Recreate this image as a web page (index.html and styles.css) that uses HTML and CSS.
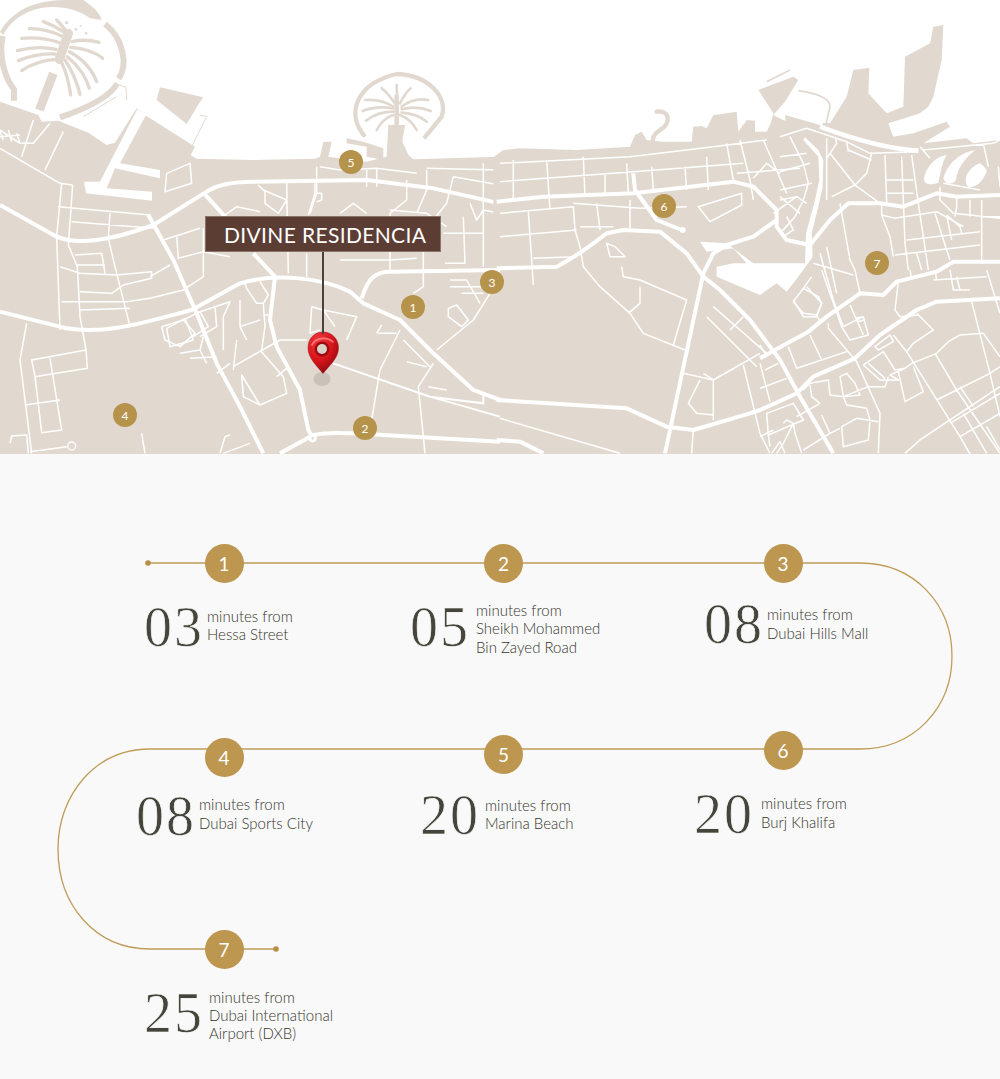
FILE: index.html
```html
<!DOCTYPE html>
<html lang="en">
<head>
<meta charset="utf-8">
<title>Divine Residencia location</title>
<link rel="stylesheet" href="styles.css">
</head>
<body>
<section class="map">
<svg class="map-art" viewBox="0 0 1000 454" aria-hidden="true">
  <defs>
    <radialGradient id="pinfill" cx="35%" cy="22%" r="85%">
      <stop offset="0" stop-color="#ee3a3c"/><stop offset=".55" stop-color="#d8141b"/><stop offset="1" stop-color="#7e0a0e"/>
    </radialGradient>
  </defs>
  <rect class="land" x="0" y="180" width="1000" height="274"/>
  <g transform="scale(.33333)">
    <path class="land" d="M0,305 L115,345 L125,365 L175,362 L265,398 L320,435 L345,428 L410,325 L435,345 L585,440 L572,465 L590,476 L760,480 L945,476 L960,470 L970,425 L995,425 L985,470 L1040,478 L1100,485 L1160,470 L1165,375 L1215,375 L1205,420 L1225,465 L1240,478 L1500,470 L1500,700 L0,700 Z"/>
    <path class="land" d="M480,262 L610,292 L596,312 L560,372 L470,300 Z"/>
    <path class="hair" d="M600,345 L620,350 L575,440 M358,255 L378,262 L380,300 M250,350 L350,290"/>
    <path class="land" d="M0,95 C40,30 100,3 190,0 L250,0 C280,20 300,40 305,60 L270,55 C230,25 170,15 120,25 C70,35 30,65 10,105 Z"/>
    <g class="ring">
      <path d="M8,108 C-5,170 15,235 42,268 L42,302"/>
      <path d="M315,72 C370,115 385,195 356,236"/>
      <path d="M352,250 C330,290 260,325 180,352"/>
      <path class="ring-thin" d="M1095,410 C1035,340 1070,250 1190,222 C1285,225 1345,290 1325,350 L1272,415"/>
    </g>
    <g class="fronds">
      <path d="M170,178 C130,180 90,195 65,212"/>
      <path d="M165,162 C130,160 85,168 55,182"/>
      <path d="M168,148 C130,140 90,142 52,152"/>
      <path d="M178,128 C140,115 100,112 65,115"/>
      <path d="M185,108 C160,95 120,85 88,86"/>
      <path d="M192,96 C175,85 150,72 130,65"/>
      <path d="M198,92 C190,82 180,70 170,60"/>
      <path d="M216,125 C245,118 270,120 297,127"/>
      <path d="M212,142 C250,145 285,155 308,175"/>
      <path d="M208,155 C245,175 275,205 290,245"/>
      <path d="M202,170 C232,195 258,230 268,265"/>
      <path d="M195,180 C215,210 232,250 240,283"/>
      <path d="M186,190 C200,220 208,255 212,285"/>
      <path class="crown" d="M178,178 L205,100"/>
      <path class="trunk" d="M118,330 L160,220"/>
    </g>
    <g class="fronds-dots"><circle cx="200" cy="68" r="5"/><circle cx="228" cy="88" r="4"/><circle cx="242" cy="78" r="3"/><circle cx="258" cy="100" r="4"/></g>
    <g class="fronds-small">
      <path d="M1180,320 C1150,300 1120,298 1095,300"/>
      <path d="M1180,325 C1150,320 1115,322 1088,333"/>
      <path d="M1180,335 C1150,335 1120,345 1098,362"/>
      <path d="M1180,345 C1160,350 1140,370 1130,390"/>
      <path d="M1185,310 C1170,290 1160,275 1145,265"/>
      <path d="M1192,305 L1190,255"/>
      <path d="M1200,310 C1210,290 1220,275 1232,265"/>
      <path d="M1205,320 C1230,300 1260,295 1285,300"/>
      <path d="M1205,328 C1235,320 1265,322 1292,333"/>
      <path d="M1205,338 C1235,340 1260,348 1280,365"/>
      <path d="M1200,345 C1225,355 1240,370 1250,390"/>
      <path class="trunk-small" d="M1190,290 L1190,380"/>
    </g>
    <path class="land" d="M1040,415 L1090,425 L1150,445 L1150,480 L1100,470 L1100,440 L1040,430 Z M1165,375 L1215,375 L1200,465 L1170,465 Z"/>
    <path class="water" d="M412,328 L300,545 L252,545 L258,580 L456,602 L456,575 L320,565 L345,505 L480,535 L480,510 L360,490 L438,345 Z"/>
    <g class="road-minor">
      <path d="M185,550 L170,710 L180,990 M218,555 L205,735 L232,800 L240,950 L258,1050 L262,1105 L105,1130 L95,1080 L258,1050 M180,550 L218,555 M175,620 L450,645 M215,665 L460,685 M330,635 L325,715 L345,800 L390,980 M225,765 L305,760 L315,820 M232,795 L315,795 M180,800 L240,820 L350,825 L455,815 L455,835 L370,855 L335,880 L240,875 M185,905 L380,905 L450,895 M240,930 L390,925"/>
      <path d="M500,520 L495,575 L575,550 L570,490 Z M80,970 L60,1080 L95,1360 M150,1075 L185,1290 L125,1298 L105,1130 M75,1215 L180,1200 M30,1330 L35,1308 L80,1305 L85,1360 M90,1355 L200,1340 M425,1300 L435,1360 M0,390 L60,430 L100,430 L150,370 M190,395 L135,510 M100,360 L65,470 M0,445 L180,550 M0,395 L10,420 M25,390 L35,425 M50,400 L60,430 M0,410 L60,405"/>
      <path d="M500,985 L555,955 L580,1020 L510,1040 Z M540,1060 L600,1050 L620,1090 M570,1075 L650,1070 M700,1100 L840,1020 L920,1020 M780,1050 L850,1130 L860,1180 L780,1215 L730,1190 L725,1125 L780,1215 M860,1105 L830,1130 M690,1090 L650,1120 M710,1020 L700,1110 M600,1050 L610,1010"/>
      <path d="M950,500 L950,580 L930,640 M1020,640 L1060,610 L1100,640 M1100,510 L1100,560 M1130,505 L1130,560 M1220,540 L1220,600 L1170,640 L1170,815 M1280,510 L1280,570 L1250,640 M1360,530 L1340,610 L1300,660 L1270,720 L1270,860 L1240,880 M1450,490 L1450,800 M1390,650 L1395,790 L1335,790 M1410,610 L1430,660 L1450,630 M1170,630 L1280,640 L1340,680 M1330,700 L1450,700 M1250,775 L1170,780 L1020,780 M960,500 L1020,510 L1130,505 L1250,520 M1280,505 L1500,510 M1360,530 L1500,555 M1450,630 L1500,640"/>
      <path d="M1040,1020 L1070,950 L970,930 M1200,990 L1140,1110 L1115,1260 M1130,1000 L1145,975 M1300,1090 L1255,1160 L1275,1360 M1210,1020 L1290,1100 M1220,1085 L1280,1100 M1285,1160 L1340,1170 M1350,860 L1450,860 M1470,880 L1420,960 L1310,1050 M1345,925 L1370,915 L1405,960 L1385,980 L1345,950 Z M1350,840 L1400,840 L1440,910 M1385,880 L1450,880 M1135,1000 L1190,1000 M660,1360 L675,1310 L690,1305 M670,1360 L750,1330"/>
      <g transform="translate(450,510)">
        <path d="M325,45 L345,65 L345,100 L385,130 L410,90 L340,60 M410,40 L415,310 M495,40 L495,70 L475,135 M500,70 L515,70 L515,90 L500,95 M225,135 L260,110 L330,125 M470,250 L470,320 M0,320 L60,285 M40,210 L150,175 M80,195 L85,265 L160,245 L240,260 M160,175 L160,320 L100,360 L0,385 M285,340 L290,355 L320,400 L340,400 L355,375 L330,335 M150,425 L240,395 L220,440 L220,540 M150,425 L175,470 L130,500 M195,410 L200,470 L150,500 M270,390 L270,470 L290,510 M340,435 L360,435 M340,400 L345,470 L335,540 M270,470 L330,450 M35,470 L45,510 L90,530 L135,490 L100,450 L35,470 M485,410 L480,490 L510,480 M485,410 L520,420 L555,470 M100,450 L150,425"/>
      </g>
    </g>
    <g class="road-mid"><path d="M1000,1090 L1290,1190 L1450,1210 L1450,1180 M1290,1190 L1500,1250"/></g>
    <g class="road-major">
      <path d="M0,615 L170,710 C240,740 350,715 460,675 L620,575 C660,548 720,545 760,545 L1100,540 L1300,565 L1500,610"/>
      <path d="M0,935 L200,985 C320,1005 440,965 575,930 L720,850 C820,820 960,830 1050,875 L1090,910 L1200,960 L1300,1060 L1420,1170 L1500,1200"/>
      <path d="M445,645 L520,780 L590,940 L650,1090 L720,1220 L790,1360"/>
      <path d="M612,580 L680,655"/>
      <path d="M760,760 L825,830 L810,960 L830,1040 L900,1170 L925,1290 L940,1315"/>
      <path d="M1085,895 C1105,830 1130,815 1170,815 L1500,810"/>
      <path d="M840,1360 L940,1305 C990,1295 1030,1300 1060,1300 L1500,1325"/>
    </g>
    <circle class="road-ring" cx="215" cy="1338" r="12"/>
    <circle class="road-ring-bold" cx="938" cy="1315" r="8"/>
  </g>
  <g transform="translate(500) scale(.33333)">
    <path class="land" d="M-20,472 L10,450 L60,445 L230,450 L390,440 L405,405 L425,395 L440,420 L490,425 L575,425 L580,380 L605,378 L620,385 L640,345 L665,342 L680,340 L710,335 L715,395 L740,360 L765,362 L765,395 L800,395 L812,370 L820,340 L775,270 L880,230 L895,240 L855,305 L820,345 L850,360 L990,370 L1040,290 L1060,210 L1108,203 L1105,280 L1160,340 L1210,320 L1215,170 L1290,130 L1300,80 L1330,75 L1325,180 L1300,290 L1285,320 L1260,340 L1180,365 L1165,370 L1180,410 L1240,400 L1340,365 L1350,380 L1270,430 L1400,415 L1420,430 L1500,420 L1500,700 L-20,700 Z"/>
    <path class="hook" d="M470,335 C510,330 515,370 480,390 C465,400 455,415 460,430"/>
    <path class="water" d="M850,340 L990,300 L1000,320 L960,385 L850,360 Z"/>
    <path class="land" d="M855,345 L960,375 L990,375 L990,390 L860,385 Z"/>
    <path class="water-thin" d="M895,272 C950,280 990,295 990,320 L975,385 M800,245 L870,210"/>
    <path class="water-line2" d="M960,380 C1080,425 1180,448 1255,452"/>
    <path class="water" d="M915,412 L955,450 L970,480 L968,560 L955,620 L935,700 L938,770 L910,810 L860,875 L830,850 L780,885 L650,830 L650,800 L700,790 L740,790 L700,745 L620,755 L600,725 L680,730 L760,790 L860,790 L915,790 L918,700 L945,600 L958,540 L955,470 L910,420 Z"/>
    <path class="water" d="M1272,540 C1275,510 1300,470 1340,465 C1325,490 1322,520 1315,548 C1295,555 1275,555 1272,540 Z M1330,535 C1340,500 1370,460 1425,450 C1390,480 1370,510 1368,540 C1360,555 1335,555 1330,535 Z M1398,530 C1405,510 1425,495 1440,490 C1455,500 1460,510 1460,515 C1450,540 1430,565 1405,560 C1398,555 1396,545 1398,530 Z"/>
    <circle class="water" cx="548" cy="690" r="9"/>
    <g class="road-minor">
      <path d="M40,480 L40,600 M140,480 L150,630 M250,470 L255,590 M315,520 L315,580 M380,490 L385,580 M455,500 L460,570 M555,500 L560,570 M620,470 L625,570 M0,490 L390,470 L640,440 L800,420 M0,545 L400,515 L730,490 M0,640 L220,620 M85,635 L100,855 M0,710 L230,690 M100,775 L230,770 M220,620 L225,690 L240,740 L250,800 L300,860 L390,940 L430,1000 L555,1050 M365,800 L370,830 L420,840 L560,900 L520,1035 M420,860 L420,910 L385,940 M290,610 L300,690 M390,600 L390,685 M595,620 L630,665 L725,615 L725,580 Z M220,610 L420,625 L560,620 M240,680 L340,680 M680,430 L700,540 M720,420 L750,540 L760,600 M790,420 L860,580 M760,535 L800,490 L840,520 M710,520 L900,505 M840,590 L900,640 M820,640 L890,590 M860,650 L880,690 L850,710 M320,730 L345,740 L375,770 L330,770 Z"/>
      <path d="M610,1120 L640,1140 L780,1060 M550,1120 L640,1140 L640,1260 M600,1140 L565,1210 L590,1240 L640,1245 M730,1095 L780,1300 L810,1360 M620,950 L770,1100 M640,920 L800,1060 M690,990 L730,950 M880,900 L910,950 L950,950 L965,910 L920,860 M580,1290 L575,1360 M0,1255 L360,1360 M940,790 L1060,825 M960,760 L1000,900 L1030,980 M980,740 L1010,880"/>
      <g transform="translate(780,810)">
        <path d="M85,230 L110,295 L260,245 M150,195 L185,270 M205,160 L205,175 L290,275 L360,430 L355,550 M185,0 L245,170 L270,210 L325,195 L310,140 L250,170 M270,105 L310,195 M285,145 L310,140 M290,155 L315,150 M285,0 L300,70 M130,55 L100,95 L130,130 L170,135 L185,100 L175,80 L130,55 M170,135 L180,155 M155,20 L130,55 M415,35 L405,120 L420,140 L475,135 M470,130 L520,180 L460,220 L440,245 M400,195 L440,245 L600,500 L630,552 M345,230 L390,195 L400,215 L355,240 Z M310,285 L370,245 L405,300 L435,295 L455,280 L530,250 L565,215 L600,195 L670,190 L720,260 M310,285 L360,330 L415,330 L390,315 L435,295 M325,280 L375,325 M415,305 L435,395 L490,365 L460,290"/>
        <path d="M130,360 L150,340 L205,330 L210,375 L250,380 L325,350 L375,350 L385,320 M150,345 L155,380 L180,400 M240,320 L260,310 L285,340 L300,375 L250,380 Z M250,380 L260,405 L320,415 L330,450 L325,510 L250,530 L245,470 L290,445 L355,455 M180,400 L110,440 M20,430 L100,400 L130,450 L25,495 Z M25,495 L30,530 M70,460 L80,450 L100,460 L70,520 L50,550 M100,460 L105,490 L125,550 M185,435 L210,490 L240,475 M210,490 L130,540 M35,550 L60,515 L75,550 M435,550 L480,510 L720,350 M530,390 L690,310 L720,290 M600,350 L640,410 M635,95 L690,310 L720,440 M525,250 L590,360 L720,550 M570,460 L720,370 M600,500 L720,430 M610,430 L680,550 M680,470 L720,540 M0,355 L80,325 M15,300 L55,280 M0,280 L30,395 M0,225 L15,250 M450,0 L455,30 M525,0 L530,30 M520,30 L680,20 M570,0 L580,60 L630,60 M590,20 L600,60 M680,0 L720,130 M0,500 L40,480"/>
      </g>
      <g transform="translate(840,300)">
        <path d="M315,165 L320,310 M365,170 L375,430 L385,510 M395,165 L415,310 L445,510 M0,110 L80,85 L200,125 L270,160 L415,155 M140,115 L140,300 M150,160 L225,255 L300,310 M200,125 L205,155 M165,110 L170,130 L140,175 M205,150 L275,180 M275,160 L260,220 L225,255 M225,255 L155,290 M320,240 L400,240 M320,280 L400,280 M490,250 L600,270 M530,290 L530,320 L525,350 M570,300 L570,350 M605,300 L605,490 M480,260 L480,300 L520,340 L660,355 M305,310 L305,345 L345,355 L470,335 L550,380 M305,345 L330,410 L340,470 M380,420 L600,395 M465,340 L500,450 L510,480 M500,345 L515,420 M500,345 L540,380 L545,400 M345,465 L600,435 M410,460 L425,510 M180,310 L210,480 L225,510 M0,170 L80,160 M0,215 L90,190 M0,270 L95,250 M30,110 L70,190 L85,250 L70,300 L45,350 L0,400 M45,350 L10,390 M0,300 L50,290 L80,310 M420,140 L450,175 M430,150 L640,130 L660,120 M610,130 L625,200 M655,200 L660,260 M605,350 L660,350"/>
      </g>
    </g>
    <g class="road-major">
      <path d="M-10,605 L130,590 L400,580 L700,545 L760,560 L830,630 L830,680 L860,720 L930,735"/>
      <path d="M-10,805 L170,800 C230,770 280,730 320,700 L370,690 L480,695 L560,760 L610,830 L660,870 L750,960 L840,1080 L900,1190 L1000,1360"/>
      <path d="M495,1360 L610,820 L640,760 L680,735 L760,710 L830,660"/>
      <path d="M-10,1200 L380,1225 L500,1280 L580,1290 L750,1240 L780,1230 L890,1180 L940,1130 L1065,1075 L1140,1005 L1250,930 L1310,905 L1500,895"/>
      <path d="M780,1075 L825,1050 L925,995 L980,950 L1080,880 L1150,885 L1190,845 L1310,815 L1360,785 L1500,785"/>
      <path d="M930,735 L990,660 L1045,610 L1140,610 L1210,620 L1310,580 L1370,590 L1500,585"/>
      <path d="M-10,1320 L60,1325 L130,1360"/>
      <path d="M400,520 L405,570 L470,660 L545,690"/>
    </g>
  </g>
  <ellipse class="pin-shadow" cx="322" cy="379" rx="8.5" ry="7"/>
  <path class="pin-body" fill="url(#pinfill)" d="M323,332 C332,332 338.500,339 338.500,348 C338.500,358 329,366 323,373.500 C317,366 308,358 308,348 C308,339 314,332 323,332 Z"/>
  <circle class="pin-ring" cx="322" cy="349" r="7.500"/>
  <path class="pin-shine" d="M312,345 C315,338 326,336 333,342"/>
  <circle class="pin-eye" cx="322" cy="349" r="5"/>
</svg>
<div class="map-label">
  <span class="map-label-text">DIVINE RESIDENCIA</span>
  <span class="map-stem"></span>
</div>
<span class="marker m1">1</span>
<span class="marker m2">2</span>
<span class="marker m3">3</span>
<span class="marker m4">4</span>
<span class="marker m5">5</span>
<span class="marker m6">6</span>
<span class="marker m7">7</span>
</section>

<section class="route">
<svg class="route-line" viewBox="0 0 1000 625" aria-hidden="true">
  <path class="route-path" d="M148,109 H860 C915,109 952,151 952,202 C952,253 915,295 860,295 H150 C95,295 58,341 58,395 C58,451 95,495 150,495 H275"/>
  <circle class="route-end" cx="148" cy="109" r="2.800"/>
  <circle class="route-end" cx="276" cy="495" r="2.800"/>
</svg>
<div class="route-grid">
  <article class="stop s1"><span class="stop-badge">1</span><div class="stop-info"><span class="stop-num">03</span><p class="stop-text">minutes from<br>Hessa Street</p></div></article>
  <article class="stop s2"><span class="stop-badge">2</span><div class="stop-info"><span class="stop-num">05</span><p class="stop-text">minutes from<br>Sheikh Mohammed<br>Bin Zayed Road</p></div></article>
  <article class="stop s3"><span class="stop-badge">3</span><div class="stop-info"><span class="stop-num">08</span><p class="stop-text">minutes from<br>Dubai Hills Mall</p></div></article>
  <article class="stop s4"><span class="stop-badge">4</span><div class="stop-info"><span class="stop-num">08</span><p class="stop-text">minutes from<br>Dubai Sports City</p></div></article>
  <article class="stop s5"><span class="stop-badge">5</span><div class="stop-info"><span class="stop-num">20</span><p class="stop-text">minutes from<br>Marina Beach</p></div></article>
  <article class="stop s6"><span class="stop-badge">6</span><div class="stop-info"><span class="stop-num">20</span><p class="stop-text">minutes from<br>Burj Khalifa</p></div></article>
  <article class="stop s7"><span class="stop-badge">7</span><div class="stop-info"><span class="stop-num">25</span><p class="stop-text">minutes from<br>Dubai International<br>Airport (DXB)</p></div></article>
</div>
</section>
</body>
</html>
```
FILE: styles.css
```css
* { box-sizing: border-box; }
html, body { margin: 0; padding: 0; }
body { background: #f9f9f9; font-family: "Lato", "Open Sans", sans-serif; width: 1000px; height: 1079px; overflow: hidden; }

/* map */
.map { position: relative; height: 454px; background: #fff; overflow: hidden; }
.map-art { display: block; width: 1000px; height: 454px; }
.land { fill: #e1d9cf; }
.water { fill: #fff; }
.hair { stroke: #e1d9cf; stroke-width: 3; fill: none; }
.water-line2 { stroke: #fff; stroke-width: 14; fill: none; }
.water-thin { stroke: #e1d9cf; stroke-width: 5; fill: none; }
.hook { stroke: #e1d9cf; stroke-width: 13; fill: none; stroke-linecap: round; }
.ring path { stroke: #e1d9cf; stroke-width: 18; fill: none; }
.ring .ring-thin { stroke-width: 13; }
.fronds path { stroke: #e1d9cf; stroke-width: 10; fill: none; stroke-linecap: round; }
.fronds .trunk { stroke-width: 27; stroke-linecap: butt; }
.fronds .crown { stroke-width: 28; stroke-linecap: round; }
.fronds-dots circle { fill: #e1d9cf; }
.fronds-small path { stroke: #e1d9cf; stroke-width: 8; fill: none; stroke-linecap: round; }
.fronds-small .trunk-small { stroke-width: 14; stroke-linecap: round; }
.road-minor path { stroke: #fff; stroke-width: 4.5; fill: none; stroke-linejoin: round; }
.road-mid path { stroke: #fff; stroke-width: 6; fill: none; }
.road-major path { stroke: #fff; stroke-width: 12; fill: none; stroke-linejoin: round; }
.road-ring { stroke: #fff; stroke-width: 4; fill: none; }
.road-ring-bold { stroke: #fff; stroke-width: 8; fill: #e1d9cf; }
.pin-shadow { fill: #c9c2b9; }
.pin-body { stroke: #a80f14; stroke-width: .5; }
.pin-ring { fill: #9d0c11; }
.pin-shine { fill: none; stroke: #f8787a; stroke-width: 1.6; stroke-linecap: round; }
.pin-eye { fill: #d9d2c8; stroke: none; }

.map-label { position: absolute; left: 205px; top: 216px; width: 236px; height: 36px; background: #5c3d33; border: 1px solid #8a7468; padding-left: 18px; display: flex; align-items: center; }
.map-label-text { font-family: "Lato", sans-serif; font-weight: 400; font-size: 21px; color: #fff; white-space: nowrap; letter-spacing: .35px; }
.map-stem { position: absolute; left: 116px; top: 35px; width: 2px; height: 82px; background: #47423e; }

.marker { position: absolute; width: 24px; height: 24px; border-radius: 50%; background: #b6934b; color: #fff; font-size: 12px; display: flex; align-items: center; justify-content: center; }
.m1 { left: 401px; top: 295px; }
.m2 { left: 353px; top: 416px; }
.m3 { left: 480px; top: 270px; }
.m4 { left: 113px; top: 403px; }
.m5 { left: 339px; top: 150px; }
.m6 { left: 652px; top: 194px; }
.m7 { left: 865px; top: 251px; }

/* route */
.route { position: relative; height: 625px; padding: 90px 0 0 84px; }
.route-line { position: absolute; left: 0; top: 0; width: 1000px; height: 625px; }
.route-path { fill: none; stroke: #c09c5a; stroke-width: 1.3; }
.route-end { fill: #b98f45; }
.route-grid { position: relative; display: grid; grid-template-columns: repeat(3, 279.5px); grid-template-rows: 186px 200px auto; }
.stop { display: flex; flex-direction: column; }
.stop-badge { width: 39px; height: 39px; border-radius: 50%; background: #bd9750; color: #fff; font-family: "Lato", sans-serif; font-weight: 400; font-size: 19px; display: flex; align-items: center; justify-content: center; margin-left: 120.5px; }
.stop-info { display: flex; align-items: center; color: #45453b; }
.stop-num { font-family: "Liberation Serif", serif; font-size: 56px; line-height: 58px; letter-spacing: 2px; color: #45453b; -webkit-text-stroke: .7px #f9f9f9; }
.stop-text { margin: 0; font-size: 15px; line-height: 18.4px; font-weight: 300; color: #35352d; white-space: nowrap; }

.s1 .stop-info { margin: 15px 0 0 60px; gap: 3px; }
.s1 .stop-text { padding-bottom: 4px; }
.s2 .stop-info { margin: 15px 0 0 46.5px; gap: 6px; }
.s2 .stop-text { padding-top: 3px; }
.s3 .stop-info { margin: 12px 0 0 61px; gap: 3px; }
.s3 .stop-text { padding-bottom: 1px; }
.s4 .stop-badge { margin-top: 8px; }
.s4 .stop-info { margin: 10px 0 0 52px; gap: 3px; }
.s4 .stop-text { padding-bottom: 5px; }
.s5 .stop-badge { margin-top: 4.5px; }
.s5 .stop-info { margin: 12px 0 0 56.5px; gap: 5px; }
.s5 .stop-text { padding-bottom: 1px; }
.s6 .stop-badge { margin-top: 1px; }
.s6 .stop-info { margin: 15px 0 0 51px; gap: 7px; }
.s6 .stop-text { padding-bottom: 3px; }
.s7 .stop-info { margin: 13.5px 0 0 60px; gap: 5px; }
.s7 .stop-text { padding-top: 5px; }
```
